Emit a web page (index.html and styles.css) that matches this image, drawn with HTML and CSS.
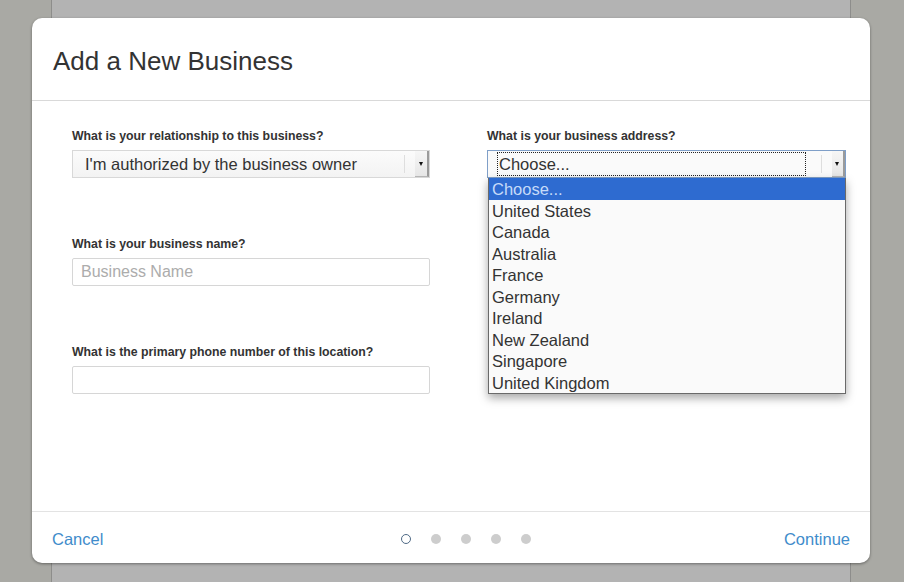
FILE: index.html
```html
<!DOCTYPE html>
<html>
  <head>
    <meta charset="UTF-8">
    <title>Add a New Business</title>
    <link rel="stylesheet" href="styles.css">
  </head>

  <body>
    <div class="desk">
      <div class="sheet"></div>
    </div>

    <div class="modal">
      <div class="modal-header">
        <h1>Add a New Business</h1>
      </div>

      <div class="modal-body">
        <div class="column">
          <div class="field">
            <label>What is your relationship to this business?</label>
            <div class="select">
              <span class="select-value">I'm authorized by the business owner</span>
              <span class="select-sep"></span>
              <span class="select-btn"><span class="caret"></span></span>
            </div>
          </div>

          <div class="field">
            <label for="bizName">What is your business name?</label>
            <input type="text" id="bizName" class="text-input" placeholder="Business Name">
          </div>

          <div class="field">
            <label for="bizPhone">What is the primary phone number of this location?</label>
            <input type="text" id="bizPhone" class="text-input">
          </div>
        </div>

        <div class="column">
          <div class="field">
            <label>What is your business address?</label>
            <div class="select-wrap">
              <div class="select select-focus">
                <span class="select-value"><span class="focus-ring">Choose...</span></span>
                <span class="select-sep"></span>
                <span class="select-btn"><span class="caret"></span></span>
              </div>
              <ul class="dropdown">
                <li class="selected">Choose...</li>
                <li>United States</li>
                <li>Canada</li>
                <li>Australia</li>
                <li>France</li>
                <li>Germany</li>
                <li>Ireland</li>
                <li>New Zealand</li>
                <li>Singapore</li>
                <li>United Kingdom</li>
              </ul>
            </div>
          </div>
        </div>
      </div>

      <div class="modal-footer">
        <a class="link cancel">Cancel</a>
        <div class="dots">
          <span class="dot current"></span>
          <span class="dot"></span>
          <span class="dot"></span>
          <span class="dot"></span>
          <span class="dot"></span>
        </div>
        <a class="link continue">Continue</a>
      </div>
    </div>
  </body>
</html>
```

FILE: styles.css
```css
body {
  margin: 0;
  background-color: #a9a9a4;
  font-family: "Liberation Sans", Arial, sans-serif;
  color: #333;
}

.desk {
  height: 582px;
  overflow: hidden;
}

.sheet {
  margin-left: 51px;
  width: 798px;
  height: 582px;
  background-color: #b3b3b3;
  border-left: 1px solid #8d8d8b;
  border-right: 1px solid #8d8d8b;
}

/* dialog sits over the page */
.modal {
  position: absolute;
  left: 32px;
  top: 18px;
  width: 838px;
  height: 545px;
  background-color: white;
  border-radius: 10px;
  box-shadow: 0 1px 3px rgba(0,0,0,.4);
  display: flex;
  flex-direction: column;
}

.modal-header {
  height: 83px;
  box-sizing: border-box;
  border-bottom: 1px solid #d9d9d9;
  display: flex;
  align-items: center;
  padding: 4px 0 0 21px;
}

h1 {
  margin: 0;
  font-size: 26px;
  font-weight: normal;
  color: #333;
}

.modal-body {
  height: 410px;
  box-sizing: border-box;
  padding: 28px 0 0 40px;
  display: grid;
  grid-template-columns: 358px 359px;
  column-gap: 57px;
  align-items: start;
}

.column {
  display: flex;
  flex-direction: column;
  gap: 59px;
}

.field label {
  display: block;
  font-size: 12.3px;
  font-weight: bold;
  line-height: 14px;
  color: #333;
  margin-bottom: 7px;
}

.select {
  height: 28px;
  box-sizing: border-box;
  border: 1px solid #d8d8d8;
  background: linear-gradient(#fbfbfb, #f3f3f3);
  display: flex;
  align-items: center;
  font-size: 16.5px;
  color: #333;
}

.select-value {
  flex: 1;
  padding-left: 12px;
  white-space: nowrap;
}

.select-sep {
  width: 1px;
  height: 18px;
  background-color: #dedede;
  margin-right: 10px;
}

.select-btn {
  width: 14px;
  height: 26px;
  box-sizing: border-box;
  background: linear-gradient(#f6f6f6, #e6e6e6);
  border-right: 2px solid #9b9b9b;
  border-bottom: 1px solid #b5b5b5;
  display: flex;
  align-items: center;
  justify-content: center;
}

.caret {
  width: 0;
  height: 0;
  border-top: 4px solid #111;
  border-left: 2.5px solid transparent;
  border-right: 2.5px solid transparent;
}

.select-wrap {
  position: relative;
}

.select-focus {
  border-color: #7f9fc8;
  background: #fafafa;
}

.select-focus .select-value {
  padding-left: 9px;
  flex: none;
  width: 309px;
  margin-right: 15px;
}

.focus-ring {
  display: block;
  height: 24px;
  box-sizing: border-box;
  border: 1px dotted #222;
  padding-left: 1px;
  line-height: 22px;
}

.text-input {
  display: block;
  width: 358px;
  height: 28px;
  box-sizing: border-box;
  border: 1px solid #d6d6d6;
  border-radius: 2px;
  padding: 0 8px;
  font-family: "Liberation Sans", Arial, sans-serif;
  font-size: 16px;
  color: #333;
  outline: none;
}

.text-input::placeholder {
  color: #acacac;
}

/* open list of the address select */
.dropdown {
  position: absolute;
  top: 28px;
  left: 1px;
  width: 358px;
  box-sizing: border-box;
  margin: 0;
  padding: 0;
  list-style: none;
  background-color: #fafafa;
  border: 1px solid #6a6a6a;
  border-top: none;
  box-shadow: 0 4px 9px rgba(0,0,0,.35);
  z-index: 2;
}

.dropdown li {
  height: 21.5px;
  box-sizing: border-box;
  padding: 1px 0 0 3px;
  line-height: 20.5px;
  font-size: 16.5px;
  color: #333;
}

.dropdown li.selected {
  background-color: #2e6bd0;
  color: #c6dbf9;
}

.modal-footer {
  height: 52px;
  box-sizing: border-box;
  border-top: 1px solid #e3e3e3;
  display: flex;
  align-items: center;
  padding: 3px 20px 0 20px;
}

.link {
  flex: 1;
  font-size: 16.5px;
  color: #3f8ccb;
  cursor: pointer;
}

.continue {
  text-align: right;
}

.dots {
  display: flex;
  gap: 20px;
  padding-left: 29px;
}

.dot {
  width: 10px;
  height: 10px;
  border-radius: 50%;
  background-color: #cdcdcd;
}

.dot.current {
  box-sizing: border-box;
  background-color: white;
  border: 1.5px solid #4f6a86;
}
```
